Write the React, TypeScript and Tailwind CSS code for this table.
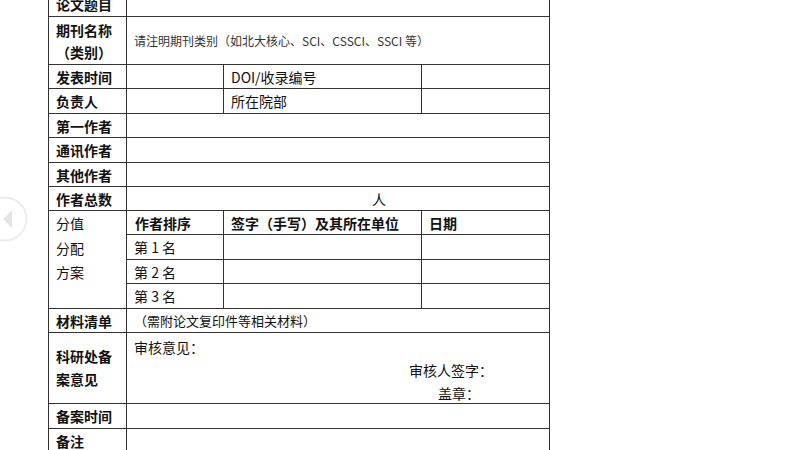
import React from "react";

const cell = "border border-[#333] px-[7px] py-0 align-middle";
const label = `${cell} font-bold`;

const plainRows = [
  { name: "第一作者", h: "h-[24px]" },
  { name: "通讯作者", h: "h-[25px]" },
  { name: "其他作者", h: "h-[24px]" },
];
const ranks = [
  { name: "第 1 名", h: "h-[25px]" },
  { name: "第 2 名", h: "h-[24px]" },
  { name: "第 3 名", h: "h-[25px]" },
];

export default function App() {
  return (
    <div
      className="relative w-[800px] h-[450px] overflow-hidden bg-white text-[#111] text-[14px]"
      style={{ fontFamily: '"Noto Sans CJK SC", "Noto Sans", sans-serif' }}
    >
      <table className="ml-[48px] -mt-[9px] w-[502px] table-fixed border-collapse leading-[22px]">
        <colgroup>
          <col className="w-[78px]" />
          <col className="w-[97px]" />
          <col className="w-[198px]" />
          <col className="w-[128px]" />
        </colgroup>
        <tbody>
          <tr className="h-[25px]">
            <td className={label}>论文题目</td>
            <td className={cell} colSpan={3}></td>
          </tr>
          <tr className="h-[48px]">
            <td className={label}>期刊名称（类别）</td>
            <td className={`${cell} text-[12px] text-[#333]`} colSpan={3}>
              请注明期刊类别（如北大核心、SCI、CSSCI、SSCI 等）
            </td>
          </tr>
          <tr className="h-[24px]">
            <td className={label}>发表时间</td>
            <td className={cell}></td>
            <td className={cell}>DOI/收录编号</td>
            <td className={cell}></td>
          </tr>
          <tr className="h-[25px]">
            <td className={label}>负责人</td>
            <td className={cell}></td>
            <td className={cell}>所在院部</td>
            <td className={cell}></td>
          </tr>
          {plainRows.map((r) => (
            <tr key={r.name} className={r.h}>
              <td className={label}>{r.name}</td>
              <td className={cell} colSpan={3}></td>
            </tr>
          ))}
          <tr className="h-[24px]">
            <td className={label}>作者总数</td>
            <td className={`${cell} pl-[245px]`} colSpan={3}>
              人
            </td>
          </tr>
          <tr className="h-[24px]">
            <td className={`${cell} align-top`} rowSpan={4}>
              <div className="leading-[24.5px]">
                <div>分值</div>
                <div>分配</div>
                <div>方案</div>
              </div>
            </td>
            <td className={`${label} pl-[8px]`}>作者排序</td>
            <td className={label}>签字（手写）及其所在单位</td>
            <td className={label}>日期</td>
          </tr>
          {ranks.map((r) => (
            <tr key={r.name} className={r.h}>
              <td className={cell}>{r.name}</td>
              <td className={cell}></td>
              <td className={cell}></td>
            </tr>
          ))}
          <tr className="h-[24px]">
            <td className={label}>材料清单</td>
            <td className={`${cell} text-[13px]`} colSpan={3}>
              （需附论文复印件等相关材料）
            </td>
          </tr>
          <tr className="h-[71px]">
            <td className={`${label} leading-[23px]`}>科研处备案意见</td>
            <td className={`${cell} align-top`} colSpan={3}>
              <div className="pt-[3px] leading-[23px]">
                <div className="h-[23px]">审核意见：</div>
                <div className="h-[23px] pl-[275px]">审核人签字：</div>
                <div className="h-[19px] pl-[304px]">盖章：</div>
              </div>
            </td>
          </tr>
          <tr className="h-[25px]">
            <td className={label}>备案时间</td>
            <td className={cell} colSpan={3}></td>
          </tr>
          <tr className="h-[30px]">
            <td className={`${label} align-top pt-[1px]`}>备注</td>
            <td className={cell} colSpan={3}></td>
          </tr>
        </tbody>
      </table>

      {/* previous-page arrow */}
      <svg
        className="absolute left-[-18px] top-[196px]"
        width="46"
        height="46"
        viewBox="0 0 46 46"
      >
        <circle cx="23" cy="23" r="21.5" fill="white" stroke="#ececec" strokeWidth="2" />
        <path d="M30 14 L21 23 L30 32 Z" fill="#e4e4e4" />
      </svg>
    </div>
  );
}
